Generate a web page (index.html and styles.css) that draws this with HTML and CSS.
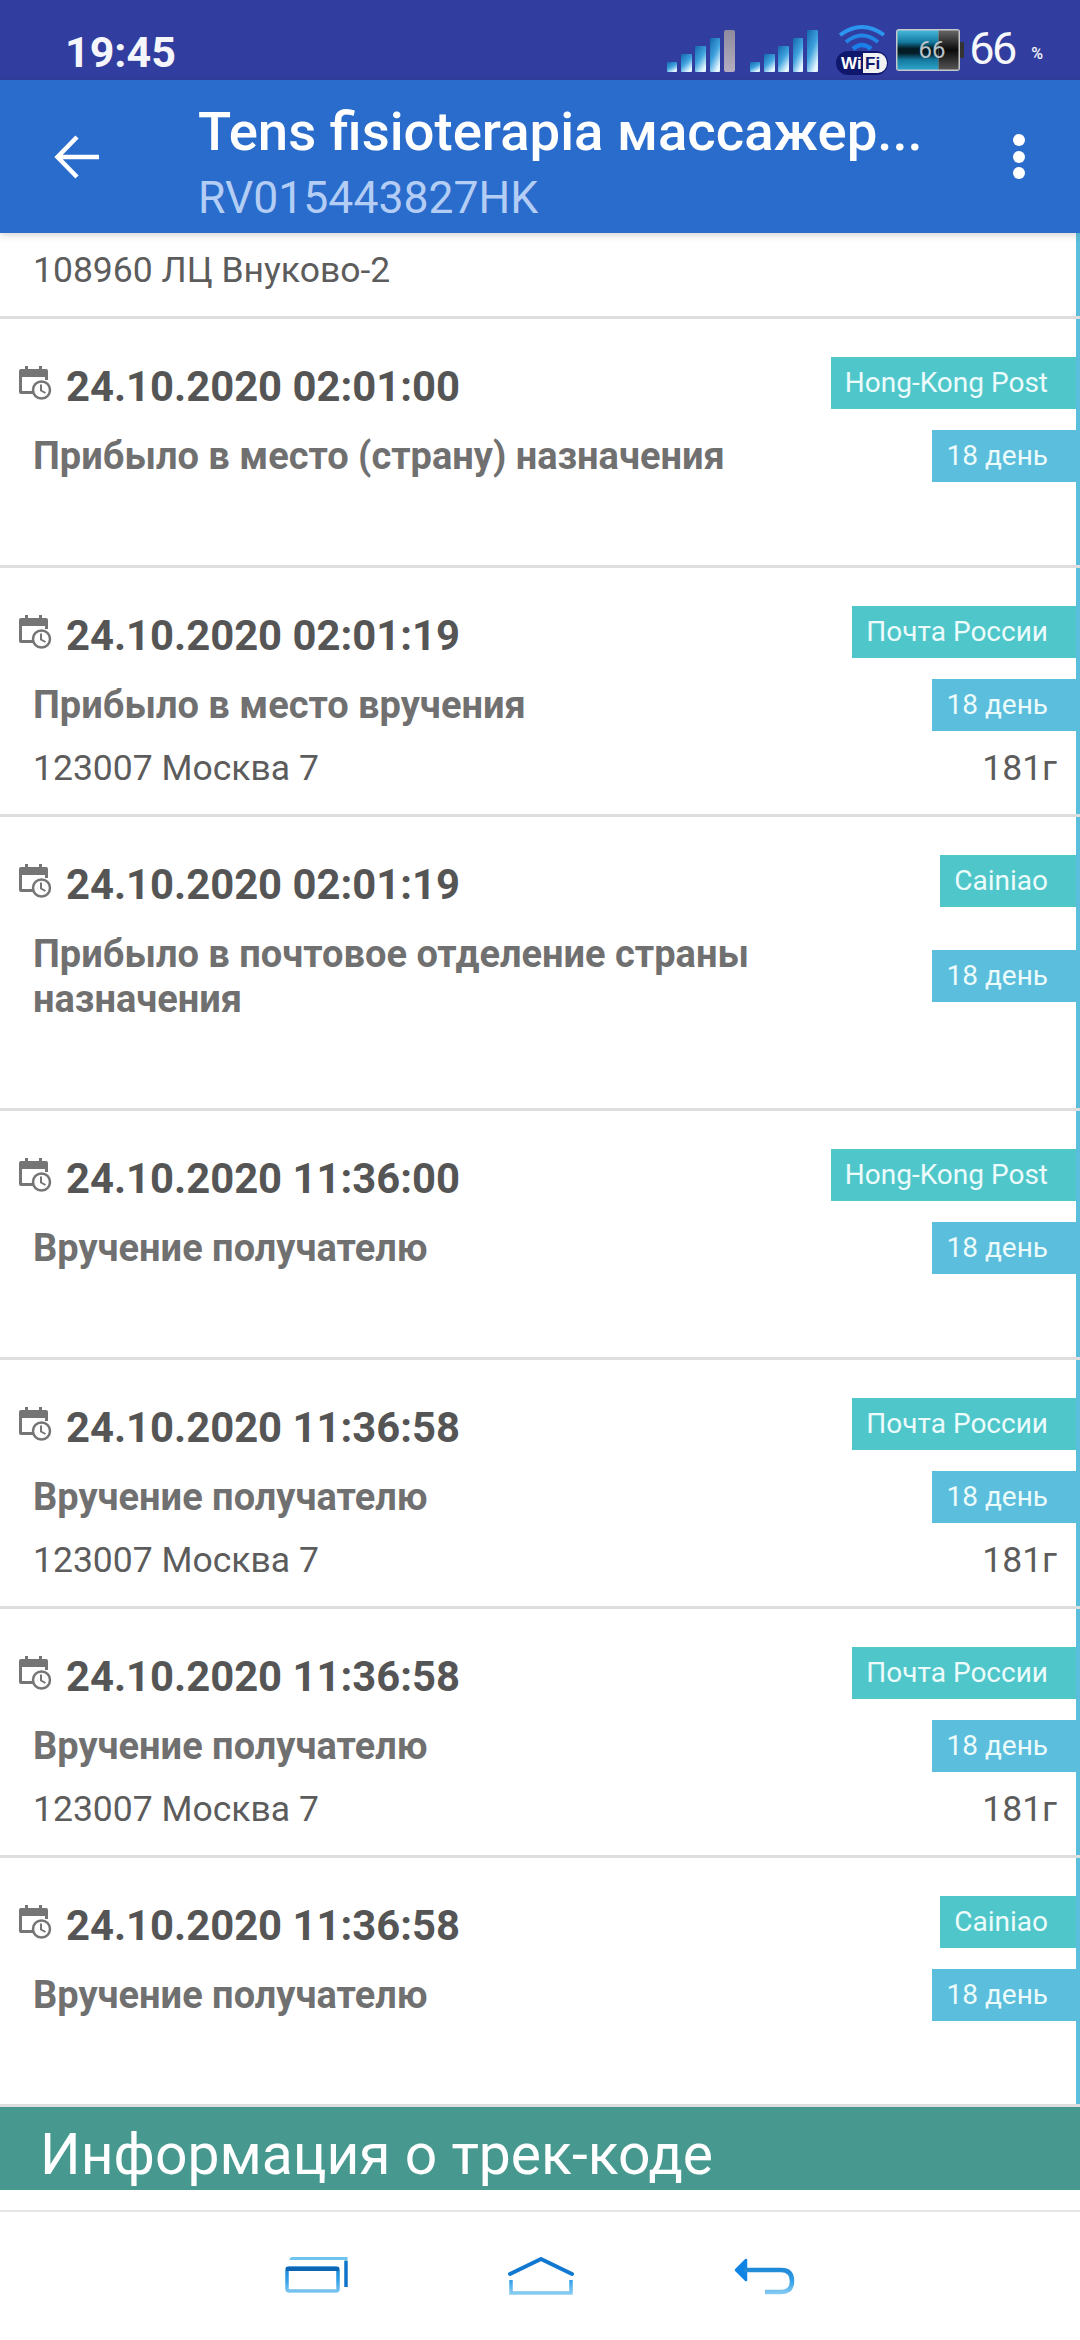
FILE: index.html
```html
<!DOCTYPE html>
<html lang="ru">
<head>
  <meta charset="UTF-8">
  <meta name="viewport" content="width=device-width, initial-scale=1.0">
  <title>Tens fisioterapia</title>
  <link rel="stylesheet" href="styles.css">
</head>
<body>
  <!-- shared gradients for the themed system icons -->
  <svg class="defs" width="0" height="0">
    <defs>
      <linearGradient id="barBlue" x1="0" y1="0" x2="0.6" y2="1">
        <stop offset="0" stop-color="#1467ad"/>
        <stop offset="0.55" stop-color="#3fa2de"/>
        <stop offset="1" stop-color="#e4f6ff"/>
      </linearGradient>
      <linearGradient id="barGrey" x1="0" y1="0" x2="0" y2="1">
        <stop offset="0" stop-color="#8f8a9e"/>
        <stop offset="1" stop-color="#b5aec0"/>
      </linearGradient>
      <linearGradient id="battFill" x1="0" y1="0" x2="0" y2="1">
        <stop offset="0" stop-color="#45b8dc"/>
        <stop offset="0.3" stop-color="#13799e"/>
        <stop offset="0.46" stop-color="#041c26"/>
        <stop offset="0.58" stop-color="#041c26"/>
        <stop offset="0.75" stop-color="#13799e"/>
        <stop offset="1" stop-color="#2fa3ca"/>
      </linearGradient>
      <linearGradient id="battEmpty" x1="0" y1="0" x2="0" y2="1">
        <stop offset="0" stop-color="#666"/>
        <stop offset="0.5" stop-color="#0a0a0a"/>
        <stop offset="1" stop-color="#555"/>
      </linearGradient>
      <linearGradient id="navBlue" gradientUnits="userSpaceOnUse" x1="0" y1="0" x2="0" y2="38">
        <stop offset="0" stop-color="#0f74c8"/>
        <stop offset="0.6" stop-color="#2f9de6"/>
        <stop offset="1" stop-color="#8fd0f2"/>
      </linearGradient>
    </defs>
  </svg>

  <header class="status-bar">
    <span class="clock">19:45</span>
    <div class="status-icons">
      <svg class="signal" width="68" height="42" viewBox="0 0 68 42">
        <rect x="0" y="32" width="10" height="10" rx="1" fill="url(#barBlue)"/>
        <rect x="14" y="24" width="11" height="18" rx="1" fill="url(#barBlue)"/>
        <rect x="28" y="16" width="11" height="26" rx="1" fill="url(#barBlue)"/>
        <rect x="43" y="8" width="10" height="34" rx="1" fill="url(#barBlue)"/>
        <rect x="57" y="0" width="11" height="42" rx="2" fill="url(#barGrey)"/>
      </svg>
      <svg class="signal signal-two" width="68" height="42" viewBox="0 0 68 42">
        <rect x="0" y="32" width="10" height="10" rx="1" fill="url(#barBlue)"/>
        <rect x="14" y="24" width="11" height="18" rx="1" fill="url(#barBlue)"/>
        <rect x="28" y="16" width="11" height="26" rx="1" fill="url(#barBlue)"/>
        <rect x="43" y="8" width="10" height="34" rx="1" fill="url(#barBlue)"/>
        <rect x="57" y="0" width="11" height="42" rx="1" fill="url(#barBlue)"/>
      </svg>
      <svg class="wifi" width="54" height="54" viewBox="0 0 54 54">
        <path d="M5 13 Q27 -3 49 13" fill="none" stroke="#2b95f0" stroke-width="4"/>
        <path d="M11 20 Q27 7 43 20" fill="none" stroke="#2186e6" stroke-width="4"/>
        <path d="M18 27 Q27 19 36 27" fill="none" stroke="#1a7fe8" stroke-width="4.5"/>
        <rect x="1" y="29" width="52" height="24" rx="12" fill="#10186e"/>
        <path d="M28 31 H43 A9 10 0 0 1 43 51 H28 Z" fill="#f2f2f2"/>
        <text class="wifi-wi" x="6" y="47">Wi</text>
        <text class="wifi-fi" x="30" y="47">Fi</text>
      </svg>
      <svg class="battery" width="68" height="42" viewBox="0 0 68 42">
        <rect x="0" y="0" width="64" height="42" rx="3" fill="#c5c9cc"/>
        <rect x="1.5" y="1.5" width="41" height="39" fill="url(#battFill)"/>
        <rect x="42.5" y="1.5" width="20" height="39" fill="url(#battEmpty)"/>
        <rect x="64" y="13" width="4" height="16" rx="1" fill="#333"/>
        <text class="batt-text" x="36" y="29">66</text>
      </svg>
      <span class="batt-num">66</span>
      <span class="batt-pct">%</span>
    </div>
  </header>

  <div class="app-bar">
    <svg class="back" width="46" height="46" viewBox="0 0 46 46">
      <path d="M45 23 H5 M23 3 L3.500 23 L23 43" fill="none" stroke="#fff" stroke-width="4.500"/>
    </svg>
    <div class="app-title">
      <div class="name">Tens fisioterapia массажер...</div>
      <div class="code">RV015443827HK</div>
    </div>
    <div class="dots"><i></i><i></i><i></i></div>
  </div>

  <main class="track-list">
    <div class="row row-cut">
      <div class="address">108960 ЛЦ Внуково-2</div>
    </div>

    <div class="row">
      <div class="date"><svg class="cal"><use href="#calIcon"/></svg>24.10.2020 02:01:00</div>
      <div class="tag tag-post">Hong-Kong Post</div>
      <div class="title">Прибыло в место (страну) назначения</div>
      <div class="tag tag-day">18 день</div>
      <div class="address"></div>
      <div class="weight"></div>
    </div>

    <div class="row">
      <div class="date"><svg class="cal"><use href="#calIcon"/></svg>24.10.2020 02:01:19</div>
      <div class="tag tag-post">Почта России</div>
      <div class="title">Прибыло в место вручения</div>
      <div class="tag tag-day">18 день</div>
      <div class="address">123007 Москва 7</div>
      <div class="weight">181г</div>
    </div>

    <div class="row">
      <div class="date"><svg class="cal"><use href="#calIcon"/></svg>24.10.2020 02:01:19</div>
      <div class="tag tag-post">Cainiao</div>
      <div class="title">Прибыло в почтовое отделение страны назначения</div>
      <div class="tag tag-day">18 день</div>
      <div class="address"></div>
      <div class="weight"></div>
    </div>

    <div class="row">
      <div class="date"><svg class="cal"><use href="#calIcon"/></svg>24.10.2020 11:36:00</div>
      <div class="tag tag-post">Hong-Kong Post</div>
      <div class="title">Вручение получателю</div>
      <div class="tag tag-day">18 день</div>
      <div class="address"></div>
      <div class="weight"></div>
    </div>

    <div class="row">
      <div class="date"><svg class="cal"><use href="#calIcon"/></svg>24.10.2020 11:36:58</div>
      <div class="tag tag-post">Почта России</div>
      <div class="title">Вручение получателю</div>
      <div class="tag tag-day">18 день</div>
      <div class="address">123007 Москва 7</div>
      <div class="weight">181г</div>
    </div>

    <div class="row">
      <div class="date"><svg class="cal"><use href="#calIcon"/></svg>24.10.2020 11:36:58</div>
      <div class="tag tag-post">Почта России</div>
      <div class="title">Вручение получателю</div>
      <div class="tag tag-day">18 день</div>
      <div class="address">123007 Москва 7</div>
      <div class="weight">181г</div>
    </div>

    <div class="row">
      <div class="date"><svg class="cal"><use href="#calIcon"/></svg>24.10.2020 11:36:58</div>
      <div class="tag tag-post">Cainiao</div>
      <div class="title">Вручение получателю</div>
      <div class="tag tag-day">18 день</div>
      <div class="address"></div>
      <div class="weight"></div>
    </div>
  </main>

  <div class="section-head">Информация о трек-коде</div>

  <nav class="nav-bar">
    <svg width="63" height="36" viewBox="0 0 63 36">
      <path d="M6 3 Q6 1.500 8 1.500 H61 V4" fill="none" stroke="#6fc4ee" stroke-width="3"/>
      <path d="M61 4 V30" fill="none" stroke="#0f74c8" stroke-width="3.500"/>
      <rect x="2" y="11" width="51" height="23" rx="2" fill="none" stroke="url(#navBlue)" stroke-width="3.500"/>
      <path d="M1 12 H54" stroke="#0d65b4" stroke-width="4"/>
    </svg>
    <svg width="66" height="38" viewBox="0 0 66 38">
      <path d="M2 17 L33 2 L64 17" fill="none" stroke="#1078d0" stroke-width="4" stroke-linecap="round" stroke-linejoin="round"/>
      <path d="M3 23 V36 H63 V23" fill="none" stroke="url(#navBlue)" stroke-width="3.500"/>
    </svg>
    <svg width="61" height="38" viewBox="0 0 61 38">
      <path d="M12 3 L2 13 L12 23 Z" fill="#0f84e4" stroke="#0f84e4" stroke-width="2.500" stroke-linejoin="round"/>
      <path d="M10 13 H47 Q58 13 58 24 Q58 35 47 35 H31" fill="none" stroke="url(#navBlue)" stroke-width="4.500"/>
    </svg>
  </nav>

  <!-- calendar with a clock, reused on every row -->
  <svg class="defs" width="0" height="0">
    <symbol id="calIcon" viewBox="0 0 34 36">
      <path d="M16 29 H3 Q1 29 1 27 V6 Q1 4 3 4 H7 V1 H10 V4 H21 V1 H24 V4 H28 Q30 4 30 6 V15 H27 V12 H4 V26 H16 Z" fill="#757575"/>
      <circle cx="23.500" cy="25" r="8.500" fill="#fff" stroke="#757575" stroke-width="2.500"/>
      <path d="M23 19.500 V25.500 L27.500 28" fill="none" stroke="#757575" stroke-width="2"/>
    </symbol>
  </svg>
</body>
</html>
```

FILE: styles.css
```css
body {
  margin: 0;
  width: 1080px;
  height: 2340px;
  overflow: hidden;
  background-color: #fff;
  font-family: Roboto, sans-serif;
  color: #555;
}

.defs {
  position: absolute;
}

/* Status bar */
.status-bar {
  height: 80px;
  background-color: #323e9f;
  display: flex;
  align-items: center;
  justify-content: space-between;
  box-sizing: border-box;
  padding-left: 65px;
}

.clock {
  font-size: 43px;
  font-weight: 700;
  color: #f4f6fb;
  padding-top: 24px;
}

.status-icons {
  display: flex;
  align-items: flex-start;
  padding-top: 22px;
  box-sizing: border-box;
  height: 80px;
  padding-right: 37px;
}

.signal {
  margin-top: 8px;
  margin-right: 15px;
}

.signal-two {
  margin-right: 17px;
}

.wifi {
  margin-right: 7px;
}

.wifi-wi,
.wifi-fi {
  font-family: "Liberation Sans", sans-serif;
  font-size: 17px;
  font-weight: 700;
  fill: #fff;
}

.wifi-fi {
  fill: #10186e;
}

.battery {
  margin-top: 7px;
  margin-right: 5px;
}

.batt-text {
  font-family: Roboto, sans-serif;
  font-size: 24px;
  fill: #b8c4c8;
  text-anchor: middle;
}

.batt-num {
  width: 44px;
  font-size: 45px;
  letter-spacing: -2.500px;
  line-height: 50px;
  color: #f6f7fb;
  margin-top: 2px;
  margin-right: 18px;
}

.batt-pct {
  font-size: 16px;
  font-weight: 500;
  color: #f6f7fb;
  margin-top: 22px;
}

/* App bar */
.app-bar {
  height: 153px;
  background-color: #2a6ccb;
  display: flex;
  align-items: center;
  position: relative;
  z-index: 1;
  box-shadow: 0 2px 8px rgba(0, 0, 0, 0.18);
}

.back {
  margin-left: 54px;
  margin-right: 98px;
}

.app-title {
  flex: 1;
  padding-top: 11px;
}

.name {
  font-size: 54.5px;
  font-weight: 500;
  line-height: 60px;
  color: #fff;
}

.code {
  font-size: 44.500px;
  line-height: 52px;
  margin-top: 11px;
  color: #b4cdf5;
}

.dots {
  display: flex;
  flex-direction: column;
  gap: 4.500px;
  margin-right: 55px;
}

.dots i {
  display: block;
  width: 12px;
  height: 12px;
  border-radius: 50%;
  background-color: #fff;
}

/* Tracking rows */
.row {
  display: grid;
  grid-template-columns: 1fr auto;
  column-gap: 10px;
  row-gap: 19px;
  align-items: center;
  box-sizing: border-box;
  padding: 38px 0 29px 18px;
  border-bottom: 3px solid #dedede;
  position: relative;
  background-color: #fff;
}

/* the blue stripe stops at each separator */
.row::after {
  content: "";
  position: absolute;
  top: 0;
  right: 0;
  bottom: 0;
  width: 4px;
  background-color: #5bbedc;
}

.row-cut {
  display: block;
  height: 86px;
  padding: 20px 0 0 18px;
}

.date {
  display: flex;
  align-items: center;
  align-self: end;
  font-size: 41.800px;
  font-weight: 700;
  line-height: 44px;
  color: #555;
}

.cal {
  width: 34px;
  height: 36px;
  margin-right: 14px;
  margin-top: -8px;
}

.title {
  font-size: 38px;
  font-weight: 700;
  line-height: 45px;
  padding: 6px 0 4px 15px;
  color: #707070;
}

.address {
  font-size: 35.5px;
  line-height: 34px;
  min-height: 34px;
  padding-left: 15px;
  color: #5c5c5c;
}

.weight {
  font-size: 35.5px;
  line-height: 34px;
  padding-right: 23px;
  justify-self: end;
  color: #5c5c5c;
}

.tag {
  justify-self: end;
  height: 52px;
  line-height: 52px;
  padding: 0 32px 0 14px;
  font-size: 28px;
  color: #ecfbfb;
}

.tag-post {
  background-color: #4fc7ca;
}

.tag-day {
  background-color: #5bbedc;
}

/* Section header */
.section-head {
  height: 83px;
  box-sizing: border-box;
  padding: 14px 0 0 40px;
  background-color: #47998f;
  font-size: 57px;
  font-weight: 400;
  line-height: 68px;
  color: #fff;
}

/* Navigation bar */
.nav-bar {
  margin-top: 20px;
  border-top: 2px solid #e6e6e6;
  height: 128px;
  box-sizing: border-box;
  display: flex;
  gap: 160px;
  padding: 45px 0 0 285px;
}
```
